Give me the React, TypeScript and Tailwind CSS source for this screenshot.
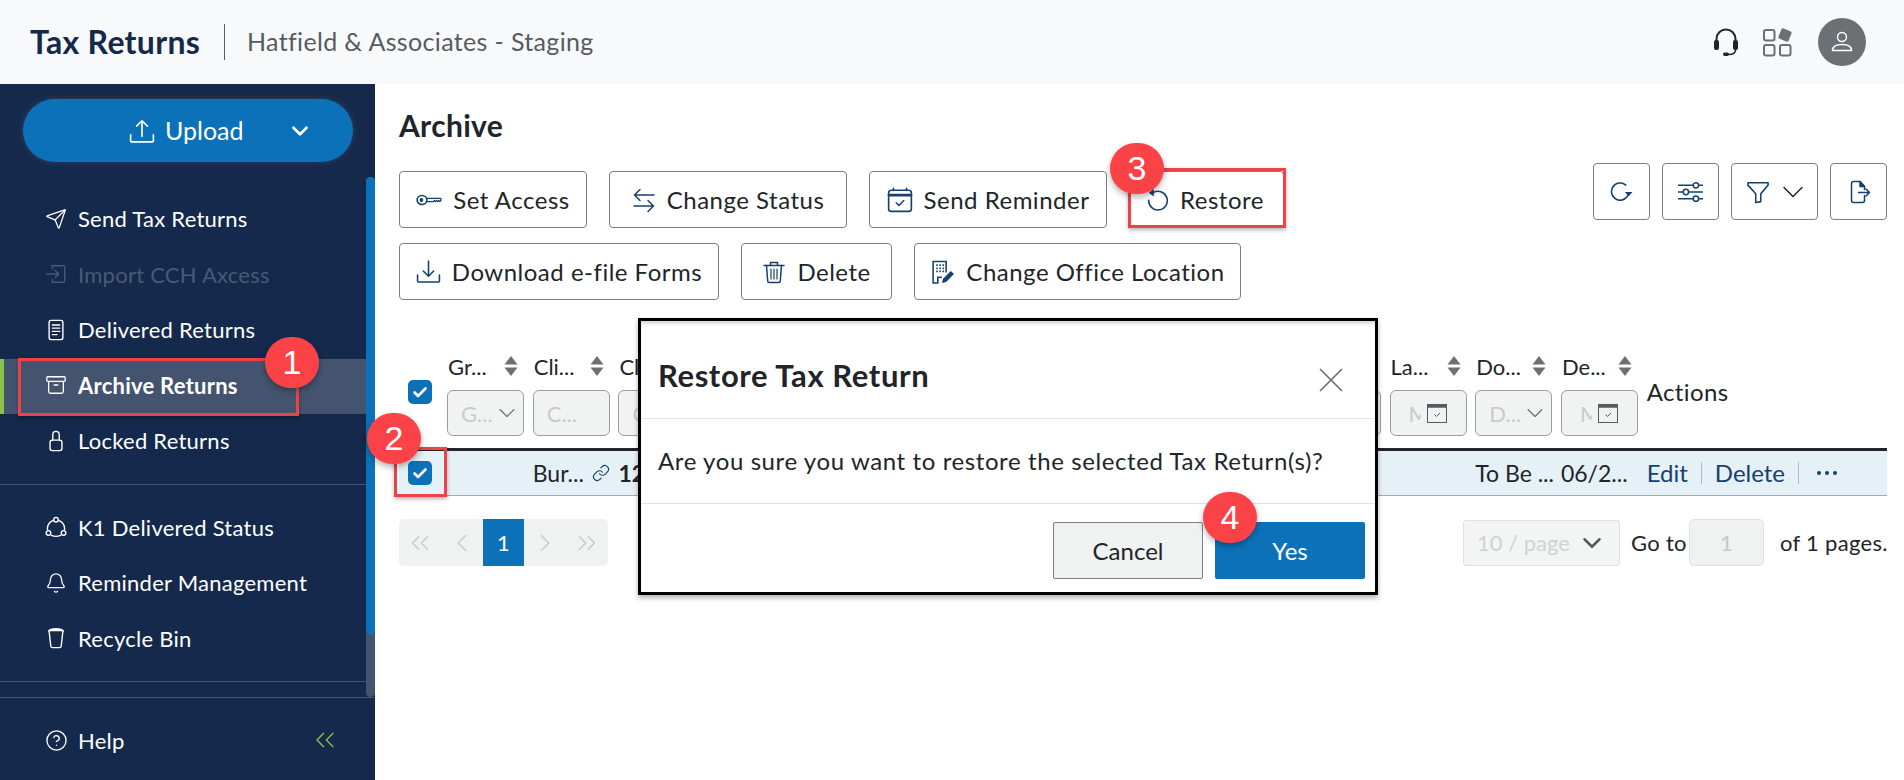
import React from 'react';
import {
  Send,
  Archive,
  Bell,
  CircleHelp,
  ChevronsLeft,
  ChevronLeft,
  ChevronRight,
  ChevronsRight,
  ChevronDown,
  Link,
  X,
} from 'lucide-react';

const Svg = ({ children, className }: { children: React.ReactNode; className: string }) => (
  <svg viewBox="0 0 24 24" fill="none" stroke="currentColor" strokeWidth={1.5} strokeLinecap="round" strokeLinejoin="round" className={className}>
    {children}
  </svg>
);

const UploadIcon = () => (
  <Svg className="w-[26px] h-[26px] text-white">
    <path d="M12 17V2.5M7 7.5l5-5 5 5" />
    <path d="M1.5 15.5v5.5a1 1 0 0 0 1 1h19a1 1 0 0 0 1-1v-5.5" />
  </Svg>
);

const ImportIcon = ({ className }: { className: string }) => (
  <Svg className={className}>
    <path d="M8 3h12a1.5 1.5 0 0 1 1.5 1.5v15A1.5 1.5 0 0 1 20 21H8" />
    <path d="M1.5 12h13M11 8l4 4-4 4M8 3v3M8 21v-3" />
  </Svg>
);

const DocIcon = ({ className }: { className: string }) => (
  <Svg className={className}>
    <rect x="4.500" y="1.500" width="15" height="21" rx="2" />
    <path d="M8 6.500h8M8 10h8M8 13.500h8M8 17h5" />
  </Svg>
);

const LockIcon = ({ className }: { className: string }) => (
  <Svg className={className}>
    <rect x="5.500" y="11" width="13" height="11.500" rx="2.500" />
    <path d="M8.500 11V5a3.500 3.500 0 0 1 7 0v6" />
  </Svg>
);

const K1Icon = ({ className }: { className: string }) => (
  <Svg className={className}>
    <circle cx="12" cy="4" r="2.500" />
    <circle cx="3.800" cy="18.500" r="2.500" />
    <circle cx="20.200" cy="18.500" r="2.500" />
    <path d="M8.500 5C4.500 7 2.200 11 2.800 15M15.500 5c4 2 6.300 6 5.700 10M7 21.200c3 1.300 7 1.300 10 0" />
  </Svg>
);

const BinIcon = ({ className }: { className: string }) => (
  <Svg className={className}>
    <path d="M4.500 4.500l1.800 16.200a2 2 0 0 0 2 1.800h7.400a2 2 0 0 0 2-1.800l1.800-16.200" />
    <path d="M4 4.500C6 1 18 1 20 4.500" fill="currentColor" />
  </Svg>
);

const KeyIcon = () => (
  <Svg className="w-[26px] h-[26px]">
    <ellipse cx="5.500" cy="12" rx="4.500" ry="4.200" />
    <circle cx="5" cy="12" r="1" fill="currentColor" />
    <path d="M10 10.500h13v2l-1 1-1-1-1 1-1-1-1 1-1-1-1 1h-6" strokeWidth={1.200} />
  </Svg>
);

const SwapIcon = () => (
  <Svg className="w-[24px] h-[26px]">
    <path d="M22 8H2.500M8 2.500L2.500 8 8 13.500" transform="translate(0 -1)" />
    <path d="M2 17h19.500M16 11.500l5.500 5.500-5.500 5.500" transform="translate(0 1)" />
  </Svg>
);

const CalendarIcon = () => (
  <svg viewBox="0 0 24 24" fill="none" stroke="currentColor" strokeLinecap="round" strokeLinejoin="round" className="w-[26px] h-[26px]">
    <rect x="1.500" y="3" width="21" height="19.500" rx="2.500" strokeWidth={1.500} />
    <path d="M6 1.200v2M18 1.200v2" strokeWidth={1.500} />
    <path d="M2 7.500h20" strokeWidth={2.600} />
    <path d="M8.500 14.500l2.500 2.500 4.500-4.500" strokeWidth={1.300} />
  </svg>
);

const RestoreIcon = () => (
  <svg viewBox="0 0 24 24" fill="none" stroke="currentColor" strokeWidth={1.600} strokeLinecap="round" className="w-[24px] h-[24px]">
    <path d="M8 4.800a9.300 9.300 0 1 1-4.300 7.400" />
    <path d="M8.800 1v7.400L3.800 4.800z" fill="currentColor" stroke="none" />
  </svg>
);

const DownloadIcon = () => (
  <Svg className="w-[25px] h-[25px]">
    <path d="M12 2v14.500M7 11.500l5 5 5-5" />
    <path d="M1.500 15.500v5.500a1 1 0 0 0 1 1h19a1 1 0 0 0 1-1v-5.500" />
  </Svg>
);

const TrashIcon = () => (
  <Svg className="w-[24px] h-[26px]">
    <path d="M2 5.500h20M8.500 5V2.500h7V5" />
    <path d="M4.500 5.500l1.200 15.500a1.500 1.500 0 0 0 1.500 1.500h9.600a1.500 1.500 0 0 0 1.500-1.500l1.200-15.500" />
    <path d="M9 9v10M12 9v10M15 9v10" strokeWidth={1.200} />
  </Svg>
);

const OfficeIcon = () => (
  <svg viewBox="0 0 24 24" fill="none" stroke="currentColor" strokeWidth={1.500} className="w-[25px] h-[26px]">
    <path d="M15.500 12.500V2H3v20.500h4.500V17h4" />
    <path d="M6 5.500h1.500M9 5.500h1.500M12 5.500h1.500M6 8.500h1.500M9 8.500h1.500M12 8.500h1.500M6 11.500h1.500M9 11.500h1.500M12 11.500h1.500" strokeWidth={1.700} />
    <path d="M11.500 22.500l1-4 7.500-7.500 3 3-7.500 7.500z" fill="currentColor" stroke="none" />
  </svg>
);

const RefreshIcon = () => (
  <svg viewBox="0 0 24 24" fill="none" stroke="currentColor" strokeWidth={1.600} strokeLinecap="round" className="w-[23px] h-[23px]">
    <path d="M19.500 13.500a9 9 0 1 1-3-8.200" />
    <path d="M15.500 12.500h8l-4 4.500z" fill="currentColor" stroke="none" />
  </svg>
);

const SlidersIcon = () => (
  <svg viewBox="0 0 30 24" fill="none" stroke="currentColor" strokeWidth={1.800} className="w-[25px] h-[22px]">
    <path d="M0 4h18M25 4h5M0 12h6M13 12h17M0 20h18M25 20h5" />
    <circle cx="21.500" cy="4" r="3.200" />
    <circle cx="9.500" cy="12" r="3.200" />
    <circle cx="21.500" cy="20" r="3.200" />
  </svg>
);

const FunnelIcon = () => (
  <Svg className="w-[22px] h-[24px]">
    <path d="M1 2h22v2.500L15 14v8.500l-5.500 1V14L1 4.500z" strokeWidth={1.700} />
  </Svg>
);

const ExportIcon = () => (
  <Svg className="w-[24px] h-[24px]">
    <path d="M17.500 15.500v5a2 2 0 0 1-2 2H6.500a2 2 0 0 1-2-2V3.500a2 2 0 0 1 2-2H13l4.500 5v3" />
    <path d="M13 1.500l4.500 5H13z" fill="currentColor" />
    <path d="M11.500 12.500h11M19 9l3.500 3.500L19 16" />
  </Svg>
);

const HeadsetIcon = () => (
  <svg viewBox="0 0 24 28" fill="none" className="w-[24px] h-[28px] text-[#212529]">
    <path d="M2.500 14V11a9.500 9.500 0 0 1 19 0v3" stroke="currentColor" strokeWidth={2} />
    <rect x="0" y="12" width="5" height="10" rx="2" fill="currentColor" />
    <rect x="19" y="12" width="5" height="10" rx="2" fill="currentColor" />
    <path d="M21.500 22c0 3-3 4.500-7 4.500" stroke="currentColor" strokeWidth={1.500} />
    <rect x="9" y="24.500" width="6" height="3.500" rx="1.700" fill="currentColor" />
  </svg>
);

const AppsIcon = () => (
  <svg viewBox="0 0 30 29" className="w-[30px] h-[29px] text-[#6b7075]" fill="none" stroke="currentColor" strokeWidth={2}>
    <rect x="1" y="2" width="10.500" height="10.500" rx="2" />
    <rect x="1" y="17" width="10.500" height="10.500" rx="2" />
    <rect x="17" y="17" width="10.500" height="10.500" rx="2" />
    <rect x="16.500" y="1.500" width="11" height="11" rx="2" fill="currentColor" stroke="none" transform="rotate(22 22 7)" />
  </svg>
);

const UserIcon = () => (
  <svg viewBox="0 0 24 24" fill="none" stroke="white" strokeWidth={1.500} className="w-[24px] h-[24px]">
    <circle cx="12" cy="7" r="4.500" />
    <path d="M2.500 20.500c0-4 4-6 9.500-6s9.500 2 9.500 6z" />
  </svg>
);

const SortIcon = () => (
  <svg viewBox="0 0 14 20" className="w-[14px] h-[20px] text-[#6b7075]" fill="currentColor">
    <path d="M7 0l6.500 8.500H.5z" />
    <path d="M7 20l6.500-8.500H.5z" />
  </svg>
);

const FilterCalendar = () => (
  <svg viewBox="0 0 20 20" fill="none" className="w-[20px] h-[20px] text-[#565b60] shrink-0">
    <rect x="0.500" y="1.500" width="19" height="18" fill="#f1f3f3" stroke="currentColor" />
    <path d="M0.500 3h19" stroke="currentColor" strokeWidth={3.500} />
    <path d="M7.500 11.500l2 2 3.500-3.500" stroke="currentColor" strokeWidth={1} />
  </svg>
);

const CheckBox = () => (
  <span className="w-6 h-6 rounded-[5px] bg-[#0b72b9] flex items-center justify-center">
    <svg viewBox="0 0 16 16" fill="none" stroke="white" strokeWidth={2.600} strokeLinecap="round" strokeLinejoin="round" className="w-4 h-4">
      <path d="M2.500 8.500l3.500 3.500 7.500-7.500" />
    </svg>
  </span>
);

const Badge = ({ n, className }: { n: number; className: string }) => (
  <div className={`absolute w-[54px] h-[51px] rounded-full bg-[#fb4347] text-white flex items-center justify-center font-['Liberation_Sans',sans-serif] text-[34px] shadow-[0_3px_6px_rgba(0,0,0,0.3)] ${className}`}>
    {n}
  </div>
);

type NavEntry = { label: string; icon: React.ReactNode; disabled?: boolean; active?: boolean };

const navTop: NavEntry[] = [
  { label: 'Send Tax Returns', icon: <Send strokeWidth={1.400} className="w-[22px] h-[22px]" /> },
  { label: 'Import CCH Axcess', icon: <ImportIcon className="w-[22px] h-[22px]" />, disabled: true },
  { label: 'Delivered Returns', icon: <DocIcon className="w-[22px] h-[22px]" /> },
  { label: 'Archive Returns', icon: <Archive strokeWidth={1.400} className="w-[22px] h-[22px]" />, active: true },
  { label: 'Locked Returns', icon: <LockIcon className="w-[22px] h-[22px]" /> },
];

const navBottom: NavEntry[] = [
  { label: 'K1 Delivered Status', icon: <K1Icon className="w-[22px] h-[22px]" /> },
  { label: 'Reminder Management', icon: <Bell strokeWidth={1.400} className="w-[22px] h-[22px]" /> },
  { label: 'Recycle Bin', icon: <BinIcon className="w-[22px] h-[22px]" /> },
];

const NavRow = ({ item }: { item: NavEntry }) => (
  <div
    className={`h-[55.5px] flex items-center gap-[11px] pl-[41px] pb-[2px] text-[22px] tracking-[0.25px] border-l-[4px] ${
      item.active ? 'bg-[#44546f] border-[#8bc34a] font-bold' : 'border-transparent'
    } ${item.disabled ? 'text-[#4a5a75]' : 'text-white'}`}
  >
    {item.icon}
    <span>{item.label}</span>
  </div>
);

const ToolButton = ({ label, icon, className }: { label: string; icon: React.ReactNode; className: string }) => (
  <button className={`h-[57px] bg-white border border-[#7a7f84] rounded-[4px] flex items-center justify-center gap-[11px] text-[24px] tracking-[0.5px] text-[#212529] ${className}`}>
    <span className="text-[#14416f] flex">{icon}</span>
    {label}
  </button>
);

const IconButton = ({ children, className }: { children: React.ReactNode; className: string }) => (
  <button className={`h-[57px] bg-white border border-[#7a7f84] rounded-[4px] flex items-center text-[#14416f] ${className}`}>
    {children}
  </button>
);

type Column = { label?: string; placeholder?: string; kind?: 'select' | 'date' | 'text' };

const columns: Column[] = [
  { label: 'Gr...', placeholder: 'G...', kind: 'select' },
  { label: 'Cli...', placeholder: 'C...', kind: 'text' },
  { label: 'Cl...', placeholder: 'C...', kind: 'text' },
  {}, {}, {}, {}, {}, {}, {}, {},
  { label: 'La...', placeholder: 'M', kind: 'date' },
  { label: 'Do...', placeholder: 'D...', kind: 'select' },
  { label: 'De...', placeholder: 'M', kind: 'date' },
];

const gridCols = 'grid grid-cols-[48px_repeat(14,85.7px)_1fr]';

export default function App() {
  return (
    <div className="relative w-[1904px] h-[780px] overflow-hidden bg-white font-['Lato',sans-serif] text-[#212529]">
      {/* header */}
      <header className="h-[84px] bg-[#f8f9fb] flex items-center pl-[30px] pr-[38px]">
        <span className="text-[32px] font-bold tracking-[0.3px] text-[#14294b] w-[194px]">Tax Returns</span>
        <span className="w-px h-[36px] bg-[#565b60]" />
        <span className="ml-[22px] text-[25px] tracking-[0.35px] text-[#565b60]">Hatfield &amp; Associates - Staging</span>
        <div className="ml-auto flex items-center gap-[25px]">
          <HeadsetIcon />
          <AppsIcon />
          <span className="w-12 h-12 rounded-full bg-[#6b7075] flex items-center justify-center">
            <UserIcon />
          </span>
        </div>
      </header>

      <div className="flex h-[696px]">
        {/* sidebar */}
        <aside className="w-[375px] shrink-0 bg-[#14294b] flex flex-col">
          <div className="flex h-[613px]">
            <div className="w-[366px] shrink-0">
              <div className="mt-[15px] ml-[23px] w-[330px] h-[63px] rounded-full bg-[#0b72b9] flex items-center text-white text-[25px] pl-[106px] shadow-[0_0_6px_rgba(255,255,255,0.12)]">
                <UploadIcon />
                <span className="ml-[10px]">Upload</span>
                <ChevronDown strokeWidth={2.500} className="w-[26px] h-[26px] ml-[43px]" />
              </div>
              <nav className="mt-[30px]">
                {navTop.map((item) => (
                  <NavRow key={item.label} item={item} />
                ))}
              </nav>
              <div className="mt-[14px] border-t border-[#44546f]" />
              <nav className="mt-[16px]">
                {navBottom.map((item) => (
                  <NavRow key={item.label} item={item} />
                ))}
              </nav>
              <div className="mt-[14px] border-t border-[#44546f]" />
            </div>
            <div className="w-[9px] mt-[93px] bg-[#44546f] rounded-full">
              <div className="h-[458px] bg-[#0b72b9] rounded-full" />
            </div>
          </div>
          <div className="flex-1 border-t border-[#44546f] flex items-center pl-[45px] pr-[34px] pt-[2px] text-white text-[22px] tracking-[0.25px]">
            <CircleHelp strokeWidth={1.400} className="w-[23px] h-[23px]" />
            <span className="ml-[10px]">Help</span>
            <ChevronsLeft strokeWidth={1} className="ml-auto w-[32px] h-[32px] text-[#8bc34a]" />
          </div>
        </aside>

        {/* main */}
        <main className="flex-1 min-w-0 pl-[24px] pr-[17px] pt-[21px]">
          <h1 className="h-[42px] leading-[40px] text-[30px] font-bold tracking-[0.3px]">Archive</h1>
          <div className="flex justify-between mt-[16px]">
            <div className="pt-[8px] flex flex-col gap-[15px]">
              <div className="flex gap-[22px]">
                <ToolButton label="Set Access" icon={<KeyIcon />} className="w-[188px]" />
                <ToolButton label="Change Status" icon={<SwapIcon />} className="w-[238px]" />
                <ToolButton label="Send Reminder" icon={<CalendarIcon />} className="w-[238px]" />
                <ToolButton label="Restore" icon={<RestoreIcon />} className="w-[155px] pr-[4px]" />
              </div>
              <div className="flex gap-[22px]">
                <ToolButton label="Download e-file Forms" icon={<DownloadIcon />} className="w-[320px]" />
                <ToolButton label="Delete" icon={<TrashIcon />} className="w-[151px]" />
                <ToolButton label="Change Office Location" icon={<OfficeIcon />} className="w-[327px]" />
              </div>
            </div>
            <div className="flex gap-[12px]">
              <IconButton className="w-[57px] justify-center"><RefreshIcon /></IconButton>
              <IconButton className="w-[57px] justify-center"><SlidersIcon /></IconButton>
              <IconButton className="w-[87px] pl-[15px] gap-[6px]">
                <FunnelIcon />
                <ChevronDown strokeWidth={1} className="w-[36px] h-[36px] text-[#212529]" />
              </IconButton>
              <IconButton className="w-[57px] justify-center"><ExportIcon /></IconButton>
            </div>
          </div>

          {/* table */}
          <div className="mt-[48px]">
            <div className={`${gridCols} h-[100px] border-b-[3px] border-[#212529] box-content`}>
              <div className="pt-[32px] pl-[9px]"><CheckBox /></div>
              {columns.map((col, i) => (
                <div key={i}>
                  <div className="h-[36px] flex items-center text-[22px]">
                    {col.label && <span className="w-[57px] pl-[1px]">{col.label}</span>}
                    {col.label && <SortIcon />}
                  </div>
                  <div className="mt-[6px] w-[77px] h-[46px] bg-[#f1f3f3] border border-[#9a9ea3] rounded-[6px] flex items-center pl-[13px] pr-[2px] text-[22px] text-[#c8cbcd] overflow-hidden">
                    <span className={col.kind === 'date' ? 'w-[12px] overflow-hidden ml-[5px] mr-[6px] shrink-0' : ''}>{col.placeholder}</span>
                    {col.kind === 'select' && <ChevronDown strokeWidth={1} className="ml-auto w-[28px] h-[28px] text-[#6b7075] shrink-0" />}
                    {col.kind === 'date' && <FilterCalendar />}
                  </div>
                </div>
              ))}
              <div className="pt-[29px] text-[24px] tracking-[0.4px] leading-[30px]">Actions</div>
            </div>
            <div className={`${gridCols} h-[45px] bg-[#e6f0f7] border-b border-[#a6abb0] items-center text-[23px]`}>
              <div className="pl-[9px] flex"><CheckBox /></div>
              <div />
              <div className="flex items-center">
                <span className="w-[59px]">Bur...</span>
                <Link strokeWidth={1.500} className="w-[18px] h-[18px] text-[#14416f]" />
              </div>
              <div className="font-bold">12</div>
              <div /><div /><div /><div /><div /><div /><div /><div /><div />
              <div className="whitespace-nowrap">To Be ...</div>
              <div className="whitespace-nowrap">06/2...</div>
              <div className="flex items-center text-[#14416f] text-[24px] whitespace-nowrap">
                <span>Edit</span>
                <span className="w-px h-[22px] bg-[#b5b9bd] ml-[13px] mr-[13px]" />
                <span>Delete</span>
                <span className="w-px h-[22px] bg-[#b5b9bd] ml-[13px] mr-[18px]" />
                <svg viewBox="0 0 20 4" className="w-[20px] h-[4px]" fill="currentColor">
                  <circle cx="2" cy="2" r="2" />
                  <circle cx="10" cy="2" r="2" />
                  <circle cx="18" cy="2" r="2" />
                </svg>
              </div>
            </div>
          </div>

          {/* pagination */}
          <div className="mt-[23px] flex justify-between items-center h-[47px]">
            <div className="flex h-[47px] rounded-[5px] bg-[#f0f1f1] overflow-hidden text-[#c5c8cb]">
              <span className="w-[42px] flex items-center justify-center"><ChevronsLeft strokeWidth={1} className="w-[30px] h-[30px]" /></span>
              <span className="w-[42px] flex items-center justify-center"><ChevronLeft strokeWidth={1} className="w-[30px] h-[30px]" /></span>
              <span className="w-[41px] flex items-center justify-center bg-[#0b72b9] text-white text-[22px]">1</span>
              <span className="w-[42px] flex items-center justify-center"><ChevronRight strokeWidth={1} className="w-[30px] h-[30px]" /></span>
              <span className="w-[42px] flex items-center justify-center"><ChevronsRight strokeWidth={1} className="w-[30px] h-[30px]" /></span>
            </div>
            <div className="flex items-center text-[22px] tracking-[0.3px]">
              <div className="w-[157px] h-[46px] bg-[#f3f4f4] border border-[#dfe1e2] rounded-[3px] flex items-center pl-[13px] text-[#d0d2d4] tracking-normal">
                10 / page
                <ChevronDown strokeWidth={2} className="ml-auto mr-[12px] w-[30px] h-[30px] text-[#565b60]" />
              </div>
              <span className="ml-[11px] w-[58px]">Go to</span>
              <div className="w-[75px] h-[47px] bg-[#f0f1f1] border border-[#dfe1e2] rounded-[5px] flex items-center justify-center text-[#c5c8cb]">1</div>
              <span className="ml-[16px] w-[107px] whitespace-nowrap">of 1 pages.</span>
            </div>
          </div>
        </main>
      </div>

      {/* overlays: callout boxes and the dialog */}
      <div className="absolute left-[18px] top-[358px] w-[281px] h-[58px] border-[3px] border-[#ef4146] shadow-[0_2px_4px_rgba(0,0,0,0.3)]" />
      <div className="absolute left-[394px] top-[447px] w-[53px] h-[50px] border-[3px] border-[#ef4146] shadow-[0_2px_4px_rgba(0,0,0,0.3)]" />
      <div className="absolute left-[1128px] top-[168px] w-[158px] h-[60px] border-[3px] border-[#ef4146] shadow-[0_2px_4px_rgba(0,0,0,0.3)]" />

      <div className="absolute left-[638px] top-[318px] w-[740px] h-[277px] bg-white border-[3px] border-black shadow-[0_3px_5px_rgba(0,0,0,0.3)] flex flex-col">
        <div className="h-[98px] border-b border-[#dfe1e2] flex items-center pl-[17px] pr-[23px] pt-[12px] shadow-[inset_0_4px_4px_-2px_rgba(0,0,0,0.2)]">
          <h2 className="text-[31px] font-bold tracking-[0.6px]">Restore Tax Return</h2>
          <X strokeWidth={1} className="ml-auto mt-[8px] w-[42px] h-[42px] text-[#6b7075]" />
        </div>
        <div className="h-[85px] border-b border-[#dfe1e2] flex items-center pl-[17px] text-[24px] tracking-[0.6px]">
          Are you sure you want to restore the selected Tax Return(s)?
        </div>
        <div className="flex-1 flex items-start justify-end gap-[12px] pt-[18px] pr-[10px] text-[24px]">
          <button className="w-[150px] h-[57px] bg-[#f0f1f1] border border-[#7a7f84] rounded-[2px]">Cancel</button>
          <button className="w-[150px] h-[57px] bg-[#0b72b9] text-white rounded-[2px]">Yes</button>
        </div>
      </div>

      <Badge n={1} className="left-[265px] top-[337px]" />
      <Badge n={2} className="left-[367px] top-[413px]" />
      <Badge n={3} className="left-[1110px] top-[143px]" />
      <Badge n={4} className="left-[1203px] top-[492px]" />
    </div>
  );
}
